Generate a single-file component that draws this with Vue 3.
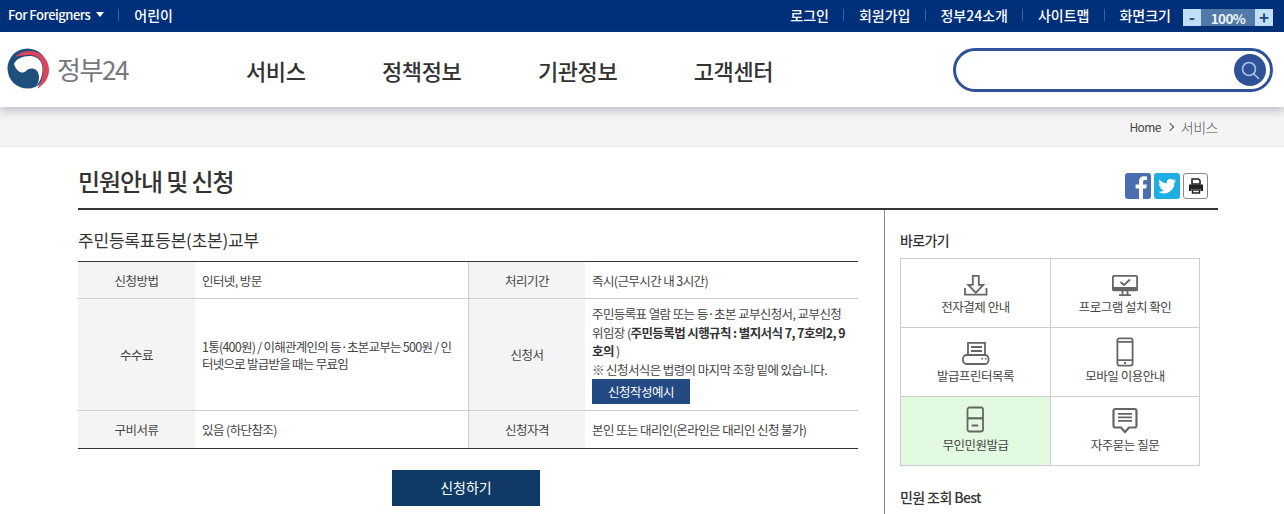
<script setup>
const topRight = ['로그인', '회원가입', '정부24소개', '사이트맵', '화면크기']
const nav = ['서비스', '정책정보', '기관정보', '고객센터']
const shortcuts = [
  { label: '전자결제 안내', icon: 'download' },
  { label: '프로그램 설치 확인', icon: 'monitor' },
  { label: '발급프린터목록', icon: 'printer' },
  { label: '모바일 이용안내', icon: 'phone' },
  { label: '무인민원발급', icon: 'kiosk', active: true },
  { label: '자주묻는 질문', icon: 'chat' },
]
</script>

<template>
  <div class="page">
    <div class="topbar">
      <div class="top-left">
        <span class="foreign">For Foreigners</span>
        <span class="caret"></span>
        <span class="sep"></span>
        <span class="kids">어린이</span>
      </div>
      <div class="top-right">
        <template v-for="(t, i) in topRight" :key="t">
          <span class="sep" v-if="i"></span>
          <span class="top-link">{{ t }}</span>
        </template>
        <div class="zoomer">
          <span class="z-btn">-</span>
          <span class="z-val">100%</span>
          <span class="z-btn">+</span>
        </div>
      </div>
    </div>

    <header class="header">
      <div class="logo">
        <svg width="44" height="44" viewBox="0 0 44 44">
          <circle cx="20.500" cy="21.500" r="20" fill="#1f4f7d" />
          <path d="M30 41.700C37 38 42 31 42 23 42 12 33.500 4 23 4 17 4 12 6 8 9.700 13 8.500 18 8 23 8 30.500 8 36 14 36 21 36.500 29 34 36 30 41.700z" fill="#dc4459" />
          <path d="M7 17C9 12 15 9 23 9 30 9 35.500 14 35.500 22 35.500 29 33 35 29 39.500 33 34 33 26 29 23 26 21 22 21 19 24 16 27 10 26 7 17z" fill="#fff" />
        </svg>
        <span class="logo-text">정부24</span>
      </div>
      <nav class="nav">
        <a v-for="n in nav" :key="n" class="nav-item">{{ n }}</a>
      </nav>
      <div class="search">
        <span class="search-btn">
          <svg width="22" height="22" viewBox="0 0 22 22" fill="none" stroke="#a9c3ea" stroke-width="1.600">
            <circle cx="10" cy="10" r="6.500" />
            <path d="M15 15l4.500 4.500" stroke-linecap="round" />
          </svg>
        </span>
      </div>
    </header>

    <div class="crumb">
      <span class="home">Home</span>
      <span class="chev"></span>
      <span class="cur">서비스</span>
    </div>

    <main class="wrap">
      <div class="title-row">
        <h1>민원안내 및 신청</h1>
        <div class="share">
          <span class="sq fb">
            <svg width="26" height="26" viewBox="0 0 26 26"><path d="M18 26V15.500h3.300l.5-4H18V9c0-1.200.4-2 2-2h2V3.400c-.4 0-1.600-.2-3-.2-3 0-5 1.800-5 5.200v3.100h-3.400v4H14V26z" fill="#fff" /></svg>
          </span>
          <span class="sq tw">
            <svg width="26" height="26" viewBox="0 0 26 26"><path d="M22 7.400c-.7.300-1.400.5-2.100.6.800-.5 1.300-1.200 1.600-2-.7.400-1.500.7-2.300.9a3.700 3.700 0 0 0-6.300 3.400c-3-.2-5.700-1.600-7.500-3.900-1 1.700-.5 3.800 1.100 4.900-.6 0-1.200-.2-1.700-.5 0 1.800 1.300 3.300 3 3.700-.5.100-1.100.200-1.700.100.500 1.500 1.900 2.500 3.500 2.600-1.600 1.300-3.600 1.800-5.500 1.600a10.500 10.500 0 0 0 16.200-9.300c.8-.6 1.500-1.300 2-2.100z" fill="#fff" /></svg>
          </span>
          <span class="sq pr">
            <svg width="18" height="18" viewBox="0 0 18 18"><path d="M5 2h6.500L13 3.500V7H5z" fill="none" stroke="#222" stroke-width="1.600" /><path d="M2 7.500h14V14h-2.500v-2h-9v2H2z" fill="#222" /><path d="M5.500 13h7v3h-7z" fill="none" stroke="#222" stroke-width="1.400" /></svg>
          </span>
        </div>
      </div>

      <div class="body">
        <section class="content">
          <h2>주민등록표등본(초본)교부</h2>
          <div class="info">
            <div class="th r1">신청방법</div>
            <div class="td r1">인터넷, 방문</div>
            <div class="th r1 lined">처리기간</div>
            <div class="td r1">즉시(근무시간 내 3시간)</div>

            <div class="th r2">수수료</div>
            <div class="td r2 fee"><span>1통(400원) / 이해관계인의 등·초본교부는 500원 / 인<br />터넷으로 발급받을 때는 무료임</span></div>
            <div class="th r2 lined">신청서</div>
            <div class="td r2 form">
              <p>주민등록표 열람 또는 등·초본 교부신청서, 교부신청<br />위임장 (<b>주민등록법 시행규칙 : 별지서식 7, 7호의2, 9<br />호의</b> )</p>
              <p>※ 신청서식은 법령의 마지막 조항 밑에 있습니다.</p>
              <a class="sample">신청작성예시</a>
            </div>

            <div class="th r3">구비서류</div>
            <div class="td r3">있음 (하단참조)</div>
            <div class="th r3 lined">신청자격</div>
            <div class="td r3">본인 또는 대리인(온라인은 대리인 신청 불가)</div>
          </div>
          <div class="apply-row">
            <a class="apply">신청하기</a>
          </div>
        </section>

        <aside class="side">
          <h3>바로가기</h3>
          <div class="grid">
            <div v-for="s in shortcuts" :key="s.label" class="cell" :class="{ active: s.active }">
              <svg width="32" height="30" viewBox="0 0 32 30" fill="none" stroke="#666" stroke-width="1.800">
                <template v-if="s.icon === 'download'">
                  <path d="M12.800 7.900h6v9h4.500L15.800 24.700 8.300 16.900h4.500z" />
                  <path d="M5 20v6.700h21.500V20" />
                </template>
                <template v-else-if="s.icon === 'monitor'">
                  <rect x="3.900" y="7.900" width="24.200" height="14.500" rx="1" />
                  <path d="M4 20.500h24" stroke-width="3" />
                  <path d="M11.500 14l3.500 3 6-5.500" />
                  <path d="M13.500 22.500v4M18.500 22.500v4M10 27.100h12" />
                </template>
                <template v-else-if="s.icon === 'printer'">
                  <path d="M8 18V5.900h17V18" />
                  <path d="M11 10h11M11 14h11" />
                  <rect x="3" y="18" width="25.500" height="9" rx="3.500" />
                  <path d="M21.500 21.800h1.500M25 21.800h1.500" stroke-width="1.600" />
                </template>
                <template v-else-if="s.icon === 'phone'">
                  <rect x="8.400" y="1.400" width="15.200" height="27.200" rx="2" />
                  <path d="M8.400 4.800h15.200M8.400 23.200h15.200M15 26h2" />
                </template>
                <template v-else-if="s.icon === 'kiosk'">
                  <rect x="7.500" y="1.500" width="15.500" height="24" rx="2" />
                  <path d="M7.500 12.300h15.500" stroke-width="2.200" />
                  <path d="M11.700 19.500h6.600" stroke-width="2" />
                </template>
                <template v-else>
                  <path d="M6.500 3h19A2 2 0 0 1 27.500 5v14.500a2 2 0 0 1-2 2H20L16 26l-4-4.500H6.500a2 2 0 0 1-2-2V5a2 2 0 0 1 2-2z" stroke-width="2.200" />
                  <path d="M9 7.800h14M9 11.300h14M9 14.800h14" />
                </template>
              </svg>
              <span>{{ s.label }}</span>
            </div>
          </div>
          <h3 class="best">민원 조회 Best</h3>
        </aside>
      </div>
    </main>
  </div>
</template>

<style>
html, body { margin: 0; height: 514px; overflow: hidden; background: #fff; }
</style>

<style scoped>
.page {
  width: 1284px;
  height: 514px;
  overflow: hidden;
  font-family: "Noto Sans CJK KR", "Noto Sans", sans-serif;
  color: #333;
  font-size: 12.5px;
  letter-spacing: -0.6px;
}
.topbar {
  height: 32px;
  box-sizing: border-box;
  background: #00307a;
  color: #fff;
  display: flex;
  justify-content: space-between;
  align-items: center;
  padding: 0 11px 3px 8px;
  font-size: 14px;
  font-weight: 500;
  letter-spacing: 0;
}
.top-left, .top-right { display: flex; align-items: center; }
.foreign { font-size: 13px; font-weight: 500; letter-spacing: -0.5px; }
.caret {
  width: 0; height: 0;
  border-left: 4px solid transparent;
  border-right: 4px solid transparent;
  border-top: 5px solid #fff;
  margin-left: 6px;
}
.sep { width: 1px; height: 12px; background: #3a63a3; margin: 0 14.500px; }
.caret + .sep { margin: 0 15px 0 14px; }
.zoomer { display: flex; align-items: center; margin: 6px 0 0 12px; height: 17px; width: 90px; background: #517aa8; font-size: 13.500px; font-weight: 700; letter-spacing: -0.6px; }
.z-btn { width: 18px; height: 17px; line-height: 15px; background: #c2e0f5; color: #1d4579; text-align: center; font-weight: 700; font-size: 17px; letter-spacing: 0; }
.z-val { flex: 1; text-align: center; color: #eef4fb; }

.header {
  position: relative;
  z-index: 1;
  height: 75px;
  background: #fff;
  display: flex;
  align-items: center;
  box-shadow: 0 3px 10px rgba(60, 70, 100, .35);
}
.logo { display: flex; align-items: center; margin-left: 7px; width: 239px; flex: none; margin-top: -2px; }
.logo-text { font-size: 26px; color: #77787b; margin-left: 6px; letter-spacing: -1.400px; }
.nav { display: flex; gap: 76.500px; flex: 1; }
.nav-item { font-size: 22px; font-weight: 500; color: #333; letter-spacing: -0.4px; }
.search {
  width: 320px;
  height: 44px;
  box-sizing: border-box;
  border: 3px solid #2f5197;
  border-radius: 22px;
  margin-right: 11px;
  display: flex;
  justify-content: flex-end;
  align-items: center;
  padding-right: 4px;
}
.search-btn { width: 32px; height: 32px; border-radius: 50%; background: #2f5197; display: flex; align-items: center; justify-content: center; }

.crumb {
  height: 39px;
  background: #f5f4f5;
  border-bottom: 1px solid #e8e8e8;
  display: flex;
  justify-content: flex-end;
  align-items: center;
  padding-right: 66px;
  font-size: 12px;
  color: #444;
}
.chev { width: 5px; height: 5px; border-top: 1px solid #555; border-right: 1px solid #555; transform: rotate(45deg); margin: 0 8px 0 6px; }
.cur { color: #555; font-size: 14px; font-weight: 300; letter-spacing: -0.5px; }

.wrap { margin: 0 66px 0 78px; }
.title-row {
  box-sizing: content-box;
  height: 55px;
  padding-top: 6px;
  border-bottom: 2px solid #333;
  display: flex;
  justify-content: space-between;
  align-items: center;
}
h1 { margin: 0; font-size: 24px; font-weight: 500; color: #333; letter-spacing: -1.100px; }
.share { display: flex; gap: 3px; margin: 11px 10px 0 0; }
.sq { width: 26px; height: 26px; border-radius: 3px; overflow: hidden; box-sizing: border-box; display: flex; align-items: center; justify-content: center; }
.fb { background: #4a6eb0; }
.tw { background: #1eaee4; }
.pr { width: 25px; border: 1px solid #888; background: #fff; }

.body { display: flex; }
.content { width: 780px; flex: none; }
h2 { margin: 18px 0 9px; font-size: 17px; font-weight: 400; line-height: 24px; color: #333; letter-spacing: -0.2px; }
.info {
  display: grid;
  grid-template-columns: 117px 273px 117px 273px;
  grid-template-rows: 37px 112px 37px;
  border-top: 1px solid #333;
  border-bottom: 1px solid #333;
  line-height: 21px;
}
.th, .td { box-sizing: border-box; display: flex; align-items: center; border-bottom: 1px solid #ccc; }
.r3 { border-bottom: 0; }
.th { background: #f4f4f4; justify-content: center; color: #444; letter-spacing: -0.5px; }
.td { padding: 0 6px 0 7px; color: #444; }
.lined { border-left: 1px solid #ccc; }
.fee { line-height: 17px; letter-spacing: -0.75px; }
.form { flex-direction: column; align-items: flex-start; justify-content: center; padding-right: 0; line-height: 18.500px; white-space: nowrap; }
.form p { margin: 0; }
.form b { font-weight: 700; color: #333; }
.sample { display: block; width: 98px; height: 25px; line-height: 25px; background: #234a82; color: #fff; text-align: center; letter-spacing: -0.5px; }
.apply-row { display: flex; justify-content: center; margin: 21px 0 0 -4px; }
.apply { width: 148px; height: 35px; line-height: 35px; padding-bottom: 1px; background: #0f3a66; color: #fff; text-align: center; font-size: 14px; font-weight: 400; letter-spacing: 0; }

.side { margin-left: 26px; padding-left: 15px; border-left: 1px solid #888; width: 300px; flex: none; }
h3 { margin: 20px 0 8px; font-size: 14px; line-height: 20px; font-weight: 500; color: #333; }
.grid { display: grid; grid-template-columns: 150px 149px; grid-auto-rows: 69px; width: 300px; box-sizing: border-box; border: 1px solid #ccc; border-bottom: 0; border-right: 0; }
.cell { box-sizing: border-box; border-right: 1px solid #ccc; border-bottom: 1px solid #ccc; display: flex; flex-direction: column; align-items: center; justify-content: flex-end; padding-bottom: 12px; color: #444; line-height: 16px; letter-spacing: -0.5px; }
.cell svg { margin-bottom: 1px; }
.active { background: #e2fadf; }
.best { margin-top: 21px; }
</style>
